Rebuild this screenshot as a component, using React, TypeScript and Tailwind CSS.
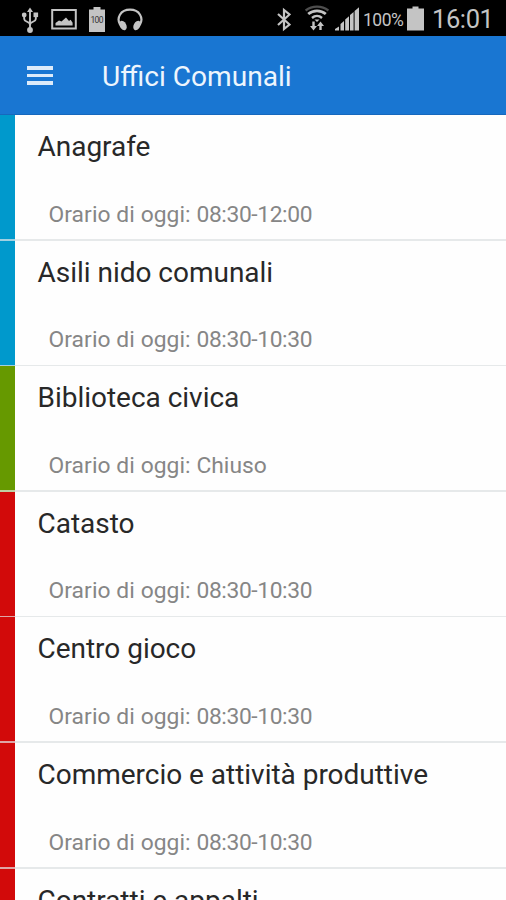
interface Office {
  name: string
  hours: string
  color: string
}

const offices: Office[] = [
  { name: 'Anagrafe', hours: '08:30-12:00', color: 'bg-[#0099cc]' },
  { name: 'Asili nido comunali', hours: '08:30-10:30', color: 'bg-[#0099cc]' },
  { name: 'Biblioteca civica', hours: 'Chiuso', color: 'bg-[#669900]' },
  { name: 'Catasto', hours: '08:30-10:30', color: 'bg-[#d20a0a]' },
  { name: 'Centro gioco', hours: '08:30-10:30', color: 'bg-[#d20a0a]' },
  { name: 'Commercio e attività produttive', hours: '08:30-10:30', color: 'bg-[#d20a0a]' },
  { name: 'Contratti e appalti', hours: '08:30-10:30', color: 'bg-[#d20a0a]' },
]

function UsbIcon() {
  return (
    <svg className="h-9 w-[18px]" viewBox="0 0 18 36" fill="none" stroke="currentColor" strokeWidth={1.9}>
      <path d="M9 11v18M3.200 15v4c0 3 5.800 2.500 5.800 5.800M14.800 15v4c0 3-5.800 2.500-5.800 5.800" />
      <path d="M9 7.500l3 4.500H6z" fill="currentColor" stroke="none" />
      <circle cx="9" cy="30" r="2.900" fill="currentColor" stroke="none" />
      <circle cx="3.200" cy="15" r="2.400" fill="currentColor" stroke="none" />
      <path d="M12.500 12.500h4.600v4.600h-4.600z" fill="currentColor" stroke="none" />
    </svg>
  )
}

function PictureIcon() {
  return (
    <svg className="h-9 w-[26px]" viewBox="0 0 26 36" fill="none">
      <path d="M1.200 10h23.600v18.500H1.200z" stroke="currentColor" strokeWidth={2} />
      <path d="M4.500 25.500v-2.500l3.500-2.400 2.500 1 4.500-4 3 3.400 1.600-1.200 2 3v2.700z" fill="currentColor" />
    </svg>
  )
}

function ChargeIcon() {
  return (
    <svg className="h-9 w-4" viewBox="0 0 16 36">
      <path d="M4.500 7h7v2.500H16V32H0V9.500h4.500z" fill="currentColor" />
      <text x="8" y="23" textAnchor="middle" fontSize="8.500" textLength="13" fill="#333">
        100
      </text>
    </svg>
  )
}

function HeadphonesIcon() {
  return (
    <svg className="h-9 w-[26px]" viewBox="0 0 26 36" fill="none">
      <path d="M3.200 25C-1 18 3.500 9.700 13 9.700S27 18 22.800 25" stroke="currentColor" strokeWidth={2.200} />
      <ellipse cx="6" cy="25.500" rx="3.300" ry="5" transform="rotate(-28 6 25.500)" fill="currentColor" />
      <ellipse cx="20" cy="25.500" rx="3.300" ry="5" transform="rotate(28 20 25.500)" fill="currentColor" />
    </svg>
  )
}

function BluetoothIcon() {
  return (
    <svg className="h-9 w-[14px]" viewBox="0 0 14 36" fill="none" stroke="currentColor" strokeWidth={2.200}>
      <path d="M1 14l11.500 10.500L7 29V10l5.500 4.500L1 25" />
    </svg>
  )
}

function WifiIcon() {
  return (
    <svg className="h-9 w-6" viewBox="0 0 24 36" fill="none" stroke="currentColor">
      <path d="M.6 10.500C7 5.300 17 5.300 23.400 10.500" strokeWidth={2.400} opacity=".4" />
      <path d="M3.200 14c5-4.300 12.600-4.300 17.600 0" strokeWidth={2.800} />
      <path d="M7 18c3-2.600 7-2.600 10 0" strokeWidth={2.400} />
      <path d="M9.500 19.500h5L12 22z" fill="currentColor" stroke="none" />
      <path d="M8.500 21.500v6M15.500 30v-6" strokeWidth={2.400} />
      <path d="M5 26h7l-3.500 4.500zM12 26l3.500-4.500L19 26z" fill="currentColor" stroke="none" />
    </svg>
  )
}

function SignalIcon() {
  return (
    <svg className="h-9 w-6" viewBox="0 0 24 36" fill="currentColor">
      <path d="M0 30.500v-1.500l4-2.500v4zM5.500 30.500V24l3.500-3v9.500zM10.200 30.500V19.500l3.800-3.200v14.200zM15 30.500V15l3.600-3v18.500zM19.600 30.500V11L24 7.300v23.200z" />
    </svg>
  )
}

function BatteryIcon() {
  return (
    <svg className="h-9 w-[17px]" viewBox="0 0 17 36" fill="currentColor">
      <path d="M5.500 6.500h6v2H17v22H0v-22h5.500z" />
    </svg>
  )
}

function StatusBar() {
  return (
    <div className="flex h-9 shrink-0 items-center bg-black pl-[21px] text-[#c4c4c4]">
      <div className="flex items-center gap-3">
        <UsbIcon />
        <PictureIcon />
        <ChargeIcon />
        <HeadphonesIcon />
      </div>
      <div className="ml-[134px] flex items-center">
        <BluetoothIcon />
        <span className="w-[14px]" />
        <WifiIcon />
        <span className="w-[6px]" />
        <SignalIcon />
        <span className="ml-[4px] w-[44px] pt-[4px] text-[17.5px] tracking-[-0.5px] whitespace-nowrap">100%</span>
        <BatteryIcon />
        <span className="ml-[8px] pt-[2px] text-[25.5px] leading-9 tracking-[-0.4px] whitespace-nowrap">16:01</span>
      </div>
    </div>
  )
}

function AppBar() {
  return (
    <header className="flex h-[79px] shrink-0 items-center border-b border-[#1668bd] bg-[#1976d2] pl-[27px] text-[#edf5fd]">
      <button className="flex w-[26px] flex-col gap-1 pt-px" aria-label="Menu">
        <span className="h-[3.5px] w-full bg-[#dcebfa]" />
        <span className="h-[3.5px] w-full bg-[#dcebfa]" />
        <span className="h-[3.5px] w-full bg-[#dcebfa]" />
      </button>
      <h1 className="ml-[49px] pt-[3px] text-[28.1px] leading-8 whitespace-nowrap">Uffici Comunali</h1>
    </header>
  )
}

function OfficeRow({ name, hours, color }: Office) {
  return (
    <li className="flex h-[125.6px] shrink-0 flex-col">
      <div className="flex min-h-0 flex-1">
        <div className={`w-[14.5px] shrink-0 ${color}`} />
        <div className="flex flex-col pl-[23px] whitespace-nowrap">
          <h2 className="pt-4 text-[28px] leading-8 tracking-[-0.02px] text-[#282828]">{name}</h2>
          <p className="pt-[37.7px] pl-[11px] text-[22.8px] leading-7 text-[#868686]">
            <span className="tracking-[0.08px]">Orario di oggi: </span>
            <span className={hours === 'Chiuso' ? 'tracking-normal' : 'tracking-[-0.38px]'}>{hours}</span>
          </p>
        </div>
      </div>
      <div className="flex h-[1.5px] shrink-0 bg-[#e6e9ea]">
        <div className={`w-[14.5px] opacity-30 ${color}`} />
      </div>
    </li>
  )
}

export default function App() {
  return (
    <div className="flex h-[900px] w-[506px] flex-col overflow-hidden bg-[#fefefe] font-[Roboto,sans-serif]">
      <StatusBar />
      <AppBar />
      <ul className="flex flex-col">
        {offices.map((office) => (
          <OfficeRow key={office.name} {...office} />
        ))}
      </ul>
    </div>
  )
}
